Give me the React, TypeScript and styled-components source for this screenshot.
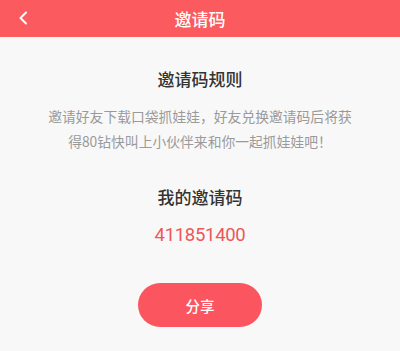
import styled, { createGlobalStyle } from "styled-components";

const GlobalStyle = createGlobalStyle`
    html, body {
        margin: 0;
        padding: 0;
        background: #f8f8f8;
        font-family: "Noto Sans CJK SC", "Noto Sans", sans-serif;
    }
`;

const Page = styled.div`
    width: 400px;
    height: 351px;
    display: flex;
    flex-direction: column;
    background: #f8f8f8;
    overflow: hidden;
`;

const Header = styled.header`
    height: 37px;
    flex-shrink: 0;
    display: flex;
    align-items: center;
    justify-content: center;
    position: relative;
    background: #fb5a5f;
    color: #fff;
    font-size: 17px;
    font-weight: 500;
`;

const BackButton = styled.button`
    position: absolute;
    left: 13px;
    top: 8px;
    width: 20px;
    height: 20px;
    padding: 0;
    border: none;
    background: none;
    display: flex;
    align-items: center;
    justify-content: center;
`;

const Content = styled.main`
    display: flex;
    flex-direction: column;
    align-items: center;
    padding-top: 30px;
`;

const Heading = styled.h2<{ $gap?: number }>`
    margin: ${(p) => p.$gap ?? 0}px 0 0;
    font-size: 17px;
    line-height: 24px;
    font-weight: 500;
    color: #333;
`;

const Rules = styled.p`
    margin: 13px 0 0;
    width: 306px;
    text-align: center;
    font-size: 13.8px;
    line-height: 25px;
    color: #9a9a9a;
`;

const Code = styled.div`
    margin-top: 14px;
    font-family: Roboto, "Noto Sans", sans-serif;
    font-size: 18.5px;
    line-height: 24px;
    letter-spacing: -0.3px;
    color: #ee5757;
`;

const ShareButton = styled.button`
    margin-top: 36px;
    width: 124px;
    height: 44px;
    border: none;
    border-radius: 22px;
    background: #fb5660;
    color: #fff;
    font-family: "Noto Sans CJK SC", sans-serif;
    font-size: 14.5px;
    font-weight: 500;
`;

function App() {
    return (
        <Page>
            <GlobalStyle />
            <Header>
                <BackButton>
                    <svg width="10" height="14" viewBox="0 0 10 14">
                        <path d="M8 1.5 L2.5 7 L8 12.5" fill="none" stroke="#fff" strokeWidth="2" strokeLinecap="round" strokeLinejoin="round" />
                    </svg>
                </BackButton>
                邀请码
            </Header>
            <Content>
                <Heading>邀请码规则</Heading>
                <Rules>邀请好友下载口袋抓娃娃，好友兑换邀请码后将获得80钻快叫上小伙伴来和你一起抓娃娃吧！</Rules>
                <Heading $gap={31}>我的邀请码</Heading>
                <Code>411851400</Code>
                <ShareButton>分享</ShareButton>
            </Content>
        </Page>
    );
}

export default App;
